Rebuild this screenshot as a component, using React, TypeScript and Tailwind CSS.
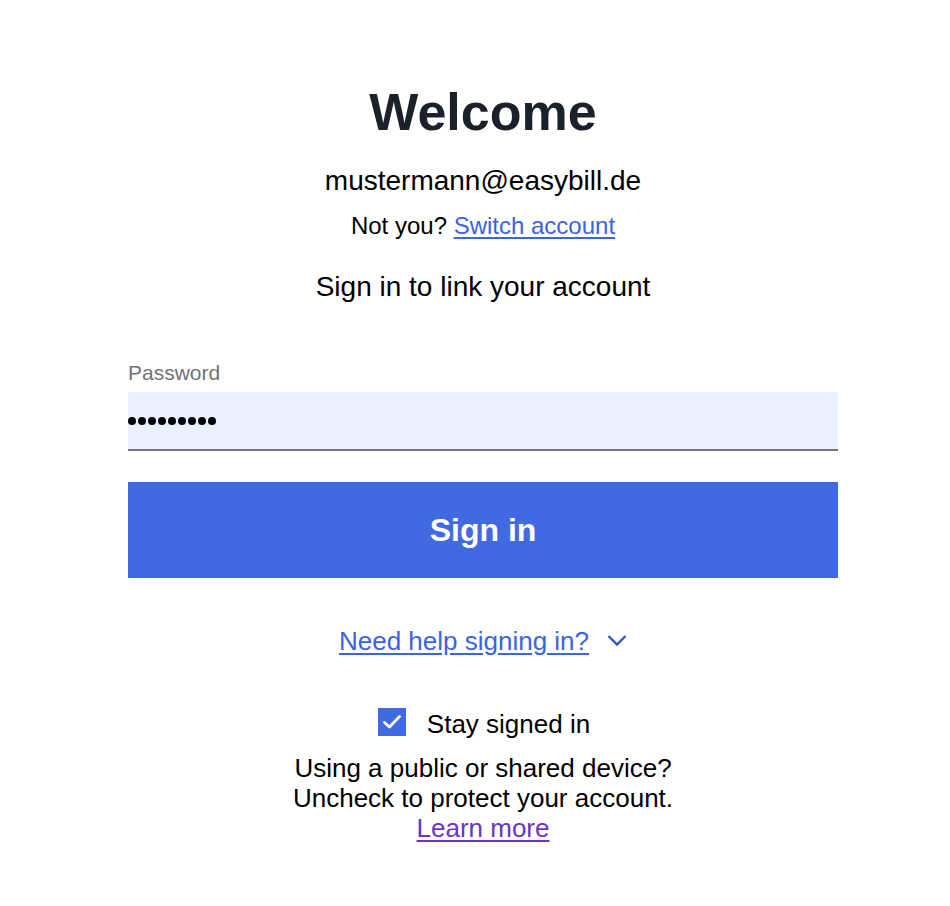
import React from "react";

const font = { fontFamily: '"Liberation Sans", Arial, sans-serif' };

const App = () => {
  return (
    <div className="min-h-[906px] bg-white text-black" style={font}>
      <div className="ml-[128px] w-[710px] pt-[82px] flex flex-col items-center">
        <h1 className="text-[52px] leading-[60px] font-bold text-[#1b212b]">Welcome</h1>

        <p className="mt-[22px] text-[28px] leading-[34px]">mustermann@easybill.de</p>

        <p className="mt-[13px] text-[24px] leading-[30px]">
          Not you?{" "}
          <a href="#" className="text-[#3b64e0] underline underline-offset-[3px]">
            Switch account
          </a>
        </p>

        <p className="mt-[29px] text-[28px] leading-[34px]">Sign in to link your account</p>

        {/* Password field */}
        <div className="mt-[57px] w-full">
          <label className="block text-[21px] leading-[24px] text-[#737373]">Password</label>
          <div className="mt-[7px] h-[59px] bg-[#e8f0fe] border-b-2 border-[#767676] flex items-center">
            <span className="flex gap-[2px] pt-[1px]">
              {Array.from({ length: 9 }).map((_, i) => (
                <span key={i} className="block w-[8px] h-[8px] rounded-full bg-black" />
              ))}
            </span>
          </div>
        </div>

        <button className="mt-[31px] w-full h-[96px] bg-[#4169e1] text-white text-[32px] font-bold">
          Sign in
        </button>

        <div className="mt-[48px] flex items-center gap-[18px]">
          <a href="#" className="text-[26px] leading-[30px] text-[#3b64e0] underline underline-offset-[3px]">
            Need help signing in?
          </a>
          <svg width="20" height="13" viewBox="0 0 20 13" className="mt-[-2px]">
            <path d="M1.5 2 L10 10.5 L18.5 2" fill="none" stroke="#2f58c2" strokeWidth="2.4" />
          </svg>
        </div>

        {/* Stay signed in */}
        <div className="mt-[52px] flex items-start gap-[21px] h-[30px] pl-[2px]">
          <span className="w-[28px] h-[28px] bg-[#4169e1] flex items-center justify-center">
            <svg width="20" height="16" viewBox="0 0 20 16">
              <path d="M2.5 8.5 L7.5 13 L17.5 2.5" fill="none" stroke="white" strokeWidth="2.8" strokeLinecap="round" strokeLinejoin="round" />
            </svg>
          </span>
          <span className="text-[26px] leading-[30px] mt-[1px]">Stay signed in</span>
        </div>

        <div className="mt-[15px] text-center text-[26px] leading-[30px]">
          <p>Using a public or shared device?</p>
          <p>Uncheck to protect your account.</p>
          <a href="#" className="text-[#6a35c4] underline underline-offset-[3px]">
            Learn more
          </a>
        </div>
      </div>
    </div>
  );
};

export default App;
